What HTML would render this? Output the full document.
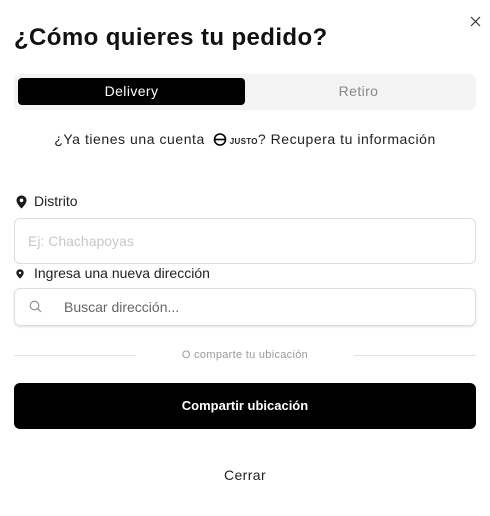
<!DOCTYPE html>
<html><head><meta charset="utf-8"><style>
*{box-sizing:border-box;margin:0;padding:0}
body{width:490px;height:516px;background:#fff;font-family:"Liberation Sans",sans-serif;position:relative;overflow:hidden;color:#111}
.a{position:absolute}
</style></head><body>
<svg class="a" style="left:470px;top:16px" width="11" height="11" viewBox="0 0 11 11"><path d="M1 1L10 10M10 1L1 10" stroke="#333" stroke-width="1.2"/></svg>
<div class="a" style="left:14px;top:24px;font-size:24px;font-weight:bold;color:#111;letter-spacing:0.4px">¿Cómo quieres tu pedido?</div>
<div class="a" style="left:14px;top:74px;width:462px;height:36px;background:#f3f3f3;border-radius:6px"></div>
<div class="a" style="left:18px;top:78px;width:227px;height:27px;background:#000;border-radius:4px;color:#fff;font-size:14px;text-align:center;line-height:27px;letter-spacing:0.4px">Delivery</div>
<div class="a" style="left:245px;top:78px;width:227px;height:27px;color:#888;font-size:14px;text-align:center;line-height:27px;letter-spacing:0.4px">Retiro</div>
<div class="a" style="left:0;top:131px;width:490px;text-align:center;font-size:14px;color:#222;letter-spacing:0.55px">¿Ya tienes una cuenta <svg width="14" height="13" viewBox="0 0 14 13" style="vertical-align:-2px;margin-left:4px"><circle cx="7" cy="6.5" r="5.5" fill="none" stroke="#000" stroke-width="1.6"/><path d="M1.5 6.5H12.5" stroke="#000" stroke-width="1.6"/></svg><b style="font-size:8px;letter-spacing:0.3px"> JUSTO</b>? Recupera tu información</div>
<svg class="a" style="left:16px;top:195px" width="11" height="14" viewBox="0 0 11 14"><path d="M5.5 0.5C2.7 0.5 0.5 2.7 0.5 5.4C0.5 9 5.5 13.5 5.5 13.5S10.5 9 10.5 5.4C10.5 2.7 8.3 0.5 5.5 0.5Z" fill="#1a1a1a"/><circle cx="5.5" cy="5.3" r="1.8" fill="#fff"/></svg>
<div class="a" style="left:34px;top:193px;font-size:14px;color:#222">Distrito</div>
<div class="a" style="left:14px;top:218px;width:462px;height:46px;border:1px solid #ddd;border-radius:6px"></div>
<div class="a" style="left:28px;top:233px;font-size:14px;color:#c8c8c8">Ej: Chachapoyas</div>
<svg class="a" style="left:16px;top:269px" width="8" height="10" viewBox="0 0 8 10"><path d="M4 0.3C2 0.3 0.3 1.9 0.3 3.9C0.3 6.5 4 9.7 4 9.7S7.7 6.5 7.7 3.9C7.7 1.9 6 0.3 4 0.3Z" fill="#222"/><circle cx="4" cy="3.9" r="1.2" fill="#fff"/></svg>
<div class="a" style="left:34px;top:265px;font-size:14px;color:#222">Ingresa una nueva dirección</div>
<div class="a" style="left:14px;top:288px;width:462px;height:38px;border:1px solid #ddd;border-radius:6px;box-shadow:0 1px 2px rgba(0,0,0,.12)"></div>
<svg class="a" style="left:29px;top:300px" width="13" height="13" viewBox="0 0 13 13"><circle cx="5.5" cy="5.5" r="4.3" fill="none" stroke="#888" stroke-width="1.1"/><path d="M8.6 8.6L12 12" stroke="#888" stroke-width="1.1"/></svg>
<div class="a" style="left:64px;top:299px;font-size:14px;color:#666">Buscar dirección...</div>
<div class="a" style="left:14px;top:355px;width:122px;height:1px;background:#e3e3e3"></div>
<div class="a" style="left:354px;top:355px;width:122px;height:1px;background:#e3e3e3"></div>
<div class="a" style="left:0;top:349px;width:490px;text-align:center;font-size:11px;color:#999;letter-spacing:0.3px">O comparte tu ubicación</div>
<div class="a" style="left:14px;top:383px;width:462px;height:46px;background:#000;border-radius:6px;color:#fff;font-size:13px;font-weight:bold;text-align:center;line-height:46px">Compartir ubicación</div>
<div class="a" style="left:0;top:467px;width:490px;text-align:center;font-size:14px;color:#222;letter-spacing:0.4px">Cerrar</div>
</body></html>
